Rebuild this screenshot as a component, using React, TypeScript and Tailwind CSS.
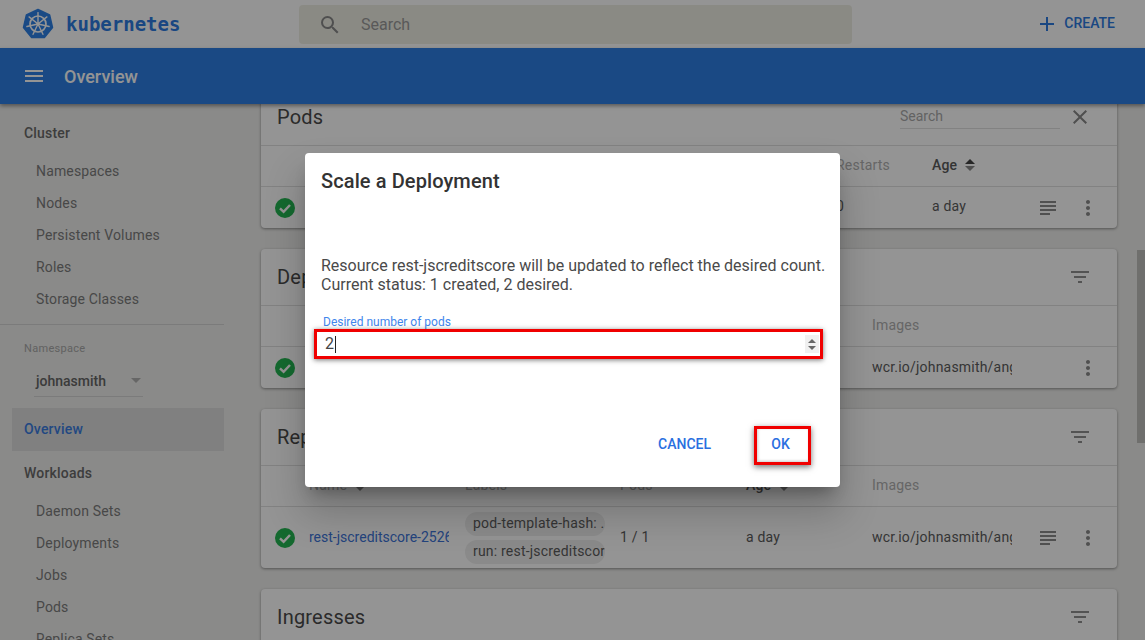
import { MdAdd, MdClose, MdFilterList, MdMenu, MdMoreVert, MdSearch, MdSubject } from 'react-icons/md';

const clusterItems = ['Namespaces', 'Nodes', 'Persistent Volumes', 'Roles', 'Storage Classes'];
const workloadItems = ['Daemon Sets', 'Deployments', 'Jobs', 'Pods', 'Replica Sets'];

function KubeLogo() {
  const spokes = [0, 51.4, 102.8, 154.3, 205.7, 257.1, 308.6];
  return (
    <svg width="32" height="32" viewBox="0 0 32 32" className="shrink-0">
      <path d="M16 1.5 L27.6 7 L30.5 19.5 L22.4 29.5 L9.6 29.5 L1.5 19.5 L4.4 7 Z" fill="#2d80e6" stroke="#2d80e6" strokeWidth="1.5" strokeLinejoin="round" />
      <circle cx="16" cy="16" r="8" fill="none" stroke="#fff" strokeWidth="1.7" />
      <circle cx="16" cy="16" r="1.8" fill="#fff" />
      {spokes.map((a) => (
        <line key={a} x1="16" y1="16" x2="16" y2="4.6" stroke="#fff" strokeWidth="1.4" strokeLinecap="round" transform={`rotate(${a} 16 16)`} />
      ))}
    </svg>
  );
}

function StatusOk() {
  return (
    <svg width="20" height="20" viewBox="0 0 20 20">
      <circle cx="10" cy="10" r="10" fill="#24b551" />
      <path d="M5 10.4 L8.6 13.8 L15 7" fill="none" stroke="#fff" strokeWidth="2.5" />
    </svg>
  );
}

function SortArrows({ active }: { active?: boolean }) {
  return (
    <svg width="12" height="14" viewBox="0 0 12 14" className="ml-[7px] shrink-0">
      <path d="M6 1 L11 6 L1 6 Z" fill={active ? '#444' : '#aaa'} />
      <path d="M1 8 L11 8 L6 13 Z" fill="#888" />
    </svg>
  );
}

function NavItem({ label }: { label: string }) {
  return <div className="h-8 pl-9 flex items-center text-sm text-[#7c7c7c] tracking-[0.15px]">{label}</div>;
}

function CardTitle({ title, children }: { title: string; children?: React.ReactNode }) {
  return (
    <div className="h-[57px] shrink-0 border-b border-[#e0e0e0] pl-4 pr-[25px] flex items-center">
      <span className="text-xl text-[#4a4a4a] tracking-[0.2px]">{title}</span>
      <div className="ml-auto flex items-center">{children || <MdFilterList size={24} className="text-[#909090]" />}</div>
    </div>
  );
}

function Actions({ log = true }: { log?: boolean }) {
  return (
    <div className="absolute left-[775px] top-0 bottom-0 flex items-center">
      <MdSubject size={24} className={log ? 'text-[#8a8a8a]' : 'invisible'} />
      <MdMoreVert size={24} className="ml-4 text-[#8a8a8a]" />
    </div>
  );
}

function WorkloadTable({ name, pods, chips, tall, log }: { name: string; pods: string; chips: string[]; tall?: boolean; log?: boolean }) {
  return (
    <>
      <div className="h-[41px] border-b border-[#e0e0e0] grid grid-cols-[48px_156px_155px_126px_126px_1fr] items-center text-sm text-[#b0b0b0] tracking-[0.2px]">
        <span />
        <span className="pb-0.5 flex items-center">Name<SortArrows /></span>
        <span className="pb-0.5">Labels</span>
        <span className="pb-0.5">Pods</span>
        <span className="pb-0.5 flex items-center font-medium text-[#5a5a5a]">Age<SortArrows active /></span>
        <span className="pb-0.5">Images</span>
      </div>
      <div className={`relative ${tall ? 'h-[61px]' : 'h-[41px]'} grid grid-cols-[48px_156px_155px_126px_126px_1fr] items-center text-sm text-[#5c5c5c] tracking-[0.2px]`}>
        <span className="pl-[14px] flex"><StatusOk /></span>
        <span className="pb-0.5 w-[140px] overflow-hidden whitespace-nowrap text-[#3d74d8] tracking-normal">{name}</span>
        <div className="flex flex-col gap-1 w-[140px]">
          {chips.map((c) => (
            <span key={c} className="h-6 rounded-xl bg-[#eeeeee] pl-2 leading-[22px] overflow-hidden whitespace-nowrap">{c}</span>
          ))}
        </div>
        <span className="pb-0.5">{pods}</span>
        <span className="pb-0.5">a day</span>
        <span className="pb-0.5 w-[140px] overflow-hidden whitespace-nowrap">wcr.io/johnasmith/angular</span>
        <Actions log={log} />
      </div>
    </>
  );
}

function PodsTable() {
  return (
    <>
      <div className="h-[41px] border-b border-[#e0e0e0] grid grid-cols-[48px_527px_96px_1fr] items-center text-sm text-[#b0b0b0] tracking-[0.2px]">
        <span />
        <span className="pb-0.5">Name</span>
        <span className="pb-0.5">Restarts</span>
        <span className="pb-0.5 flex items-center font-medium text-[#5a5a5a]">Age<SortArrows active /></span>
      </div>
      <div className="relative h-[41px] grid grid-cols-[48px_527px_96px_1fr] items-center text-sm text-[#5c5c5c] tracking-[0.2px]">
        <span className="pl-[14px] flex"><StatusOk /></span>
        <span className="pb-1 text-[#3d74d8]">rest-jscreditscore-2526</span>
        <span className="pb-1">0</span>
        <span className="pb-1">a day</span>
        <Actions />
      </div>
    </>
  );
}

function ScaleDialog() {
  return (
    <div className="absolute left-[305px] top-[153px] w-[535px] h-[334px] bg-white rounded shadow-[0_11px_15px_-7px_rgba(0,0,0,0.3),0_24px_38px_3px_rgba(0,0,0,0.2)] flex flex-col">
      <div className="pl-4 pt-4 text-xl leading-6 font-medium text-[#333] tracking-[0.1px]">Scale a Deployment</div>
      <div className="pl-4 mt-[63px] text-base leading-[19px] text-[#4a4a4a]">
        <div>Resource rest-jscreditscore will be updated to reflect the desired count.</div>
        <div>Current status: 1 created, 2 desired.</div>
      </div>
      <div className="pl-[18px] mt-[21px] text-xs leading-[14px] text-[#3f86ec]">Desired number of pods</div>
      <div className="ml-[9px] mr-[17px] h-[30px] border-[3px] border-[#f00000] shadow-[0_1px_5px_rgba(0,0,0,0.55)] flex items-center pl-2 pr-[1px] text-base text-[#444]">
        <span>2</span>
        <span className="w-px h-[17px] bg-[#222] ml-px" />
        <div className="ml-auto w-[14px] h-[18px] bg-[#f0f0f0] flex flex-col items-center justify-center gap-[3px]">
          <span className="w-0 h-0 border-x-[4px] border-x-transparent border-b-[4px] border-b-[#666]" />
          <span className="w-0 h-0 border-x-[4px] border-x-transparent border-t-[4px] border-t-[#666]" />
        </div>
      </div>
      <div className="mt-auto mb-[22px] flex items-center justify-end pr-[29px] text-sm font-medium text-[#2a6fe0]">
        <span className="mr-[43px] pb-1">CANCEL</span>
        <span className="w-[57px] h-[39px] border-[3px] border-[#f00000] shadow-[0_2px_6px_rgba(0,0,0,0.55),inset_1px_-1px_3px_rgba(0,0,0,0.2)] flex items-center justify-center pb-1 pr-1">OK</span>
      </div>
    </div>
  );
}

export default function App() {
  return (
    <div className="relative h-[640px] w-[1145px] overflow-hidden bg-[#eeeeec] flex flex-col font-['Roboto',sans-serif]">
      <div className="h-12 shrink-0 bg-white flex items-center">
        <div className="w-[299px] pl-[22px] flex items-center">
          <KubeLogo />
          <span className="ml-[12px] font-['DejaVu_Sans_Mono',monospace] font-bold text-[19px] text-[#2d7be0]">kubernetes</span>
        </div>
        <div className="w-[553px] h-[39px] mt-px bg-[#eeeee4] rounded-sm flex items-center pl-[19px] text-base text-[#9a9a9a]">
          <MdSearch size={24} className="text-[#888]" />
          <span className="ml-[19px]">Search</span>
        </div>
        <div className="ml-auto pr-[30px] flex items-center text-sm font-medium text-[#2d7be0]">
          <MdAdd size={24} />
          <span className="ml-[5px] pb-0.5">CREATE</span>
        </div>
      </div>
      <div className="relative z-10 h-14 shrink-0 bg-[#2d7fe4] shadow-[0_2px_4px_rgba(0,0,0,0.4)] flex items-center pl-[22px] text-white">
        <MdMenu size={24} />
        <span className="ml-[18px] pt-0.5 text-lg font-medium">Overview</span>
      </div>
      <div className="flex-1 min-h-0 flex">
        <aside className="w-[260px] shrink-0 pt-[7px]">
          <div className="h-11 pl-6 flex items-center text-sm font-medium text-[#6a6a6a] tracking-[0.2px]">Cluster</div>
          {clusterItems.map((i) => <NavItem key={i} label={i} />)}
          <div className="mt-[9px] h-px w-[224px] bg-[#d4d4d4]" />
          <div className="mt-[9px] h-[30px] pl-6 flex items-center text-[11px] text-[#a8a8a8] tracking-[0.3px]">Namespace</div>
          <div className="mt-px ml-[34px] w-[109px] h-[32px] pl-[2px] border-b border-[#d4d4d4] flex items-center text-sm font-medium text-[#666]">
            johnasmith
            <span className="ml-auto mr-[2px] w-0 h-0 border-x-[5px] border-x-transparent border-t-[5px] border-t-[#b0b0b0]" />
          </div>
          <div className="mt-[11px] ml-3 w-[212px] h-[43px] pl-3 pb-0.5 bg-[#dcdcdc] flex items-center text-sm font-medium text-[#3a7ce0] tracking-[0.2px]">Overview</div>
          <div className="h-11 pl-6 flex items-center text-sm font-medium text-[#6a6a6a] tracking-[0.2px]">Workloads</div>
          {workloadItems.map((i) => <NavItem key={i} label={i} />)}
        </aside>
        <main className="flex-1 min-w-0 pl-px pr-5 -mt-[15px] flex flex-col gap-[21px]">
          <section className="bg-white rounded-sm shadow-[0_1px_3px_rgba(0,0,0,0.4)] shrink-0">
            <CardTitle title="Pods">
              <div className="w-[160px] h-[25px] mr-2 mt-[-2px] border-b border-[#e0e0e0] text-sm text-[#aaa] flex items-center">Search</div>
              <MdClose size={24} className="text-[#888]" />
            </CardTitle>
            <PodsTable />
          </section>
          <section className="bg-white rounded-sm shadow-[0_1px_3px_rgba(0,0,0,0.4)] shrink-0">
            <CardTitle title="Deployments" />
            <WorkloadTable name="rest-jscreditscore" pods="1 / 2" chips={[]} log={false} />
          </section>
          <section className="bg-white rounded-sm shadow-[0_1px_3px_rgba(0,0,0,0.4)] shrink-0">
            <CardTitle title="Replica Sets" />
            <WorkloadTable name="rest-jscreditscore-2526410" pods="1 / 1" chips={['pod-template-hash: ...', 'run: rest-jscreditscore']} tall />
          </section>
          <section className="bg-white rounded-sm shadow-[0_1px_3px_rgba(0,0,0,0.4)] shrink-0">
            <CardTitle title="Ingresses" />
          </section>
        </main>
        <div className="w-2 shrink-0 pt-[146px]">
          <div className="h-[193px] bg-[#c0c0bc]" />
        </div>
      </div>
      <div className="absolute inset-0 z-20 bg-black/42" />
      <div className="absolute inset-0 z-30">
        <ScaleDialog />
      </div>
    </div>
  );
}
